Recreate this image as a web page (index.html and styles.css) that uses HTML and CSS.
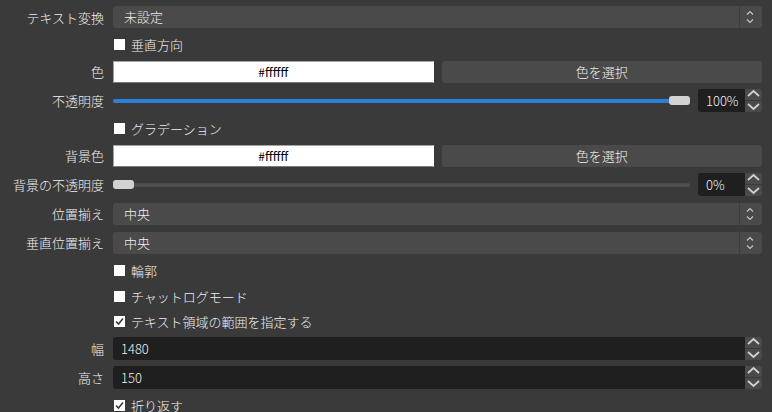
FILE: index.html
```html
<!DOCTYPE html>
<html>
<head>
  <meta charset="utf-8">
  <title>テキストのプロパティ</title>
  <link rel="stylesheet" href="styles.css">
</head>
<body>

  <div class="props">

    <div class="row first">
      <label class="name">テキスト変換</label>
      <div class="combo">
        <span class="combo-text">未設定</span>
        <span class="combo-arrows"><svg width="22" height="22" viewBox="0 0 22 22"><polyline points="7,8.5 10,5.5 13,8.5"/><polyline points="7,13.5 10,16.5 13,13.5"/></svg></span>
      </div>
    </div>

    <div class="row check">
      <span></span>
      <div class="cb"><span class="box"></span>垂直方向</div>
    </div>

    <div class="row">
      <label class="name">色</label>
      <div class="color-grid">
        <div class="color-field">#ffffff</div>
        <div class="btn">色を選択</div>
      </div>
    </div>

    <div class="row">
      <label class="name">不透明度</label>
      <div class="slider-row">
        <div class="track">
          <div class="fill"></div>
          <div class="handle end"></div>
        </div>
        <div class="spin">
          <div class="spin-val">100%</div>
          <div class="spin-btns">
            <span class="up"><svg width="17" height="11" viewBox="0 0 17 11"><polyline points="3,7 8.5,2 14,7"/></svg></span>
            <span class="down"><svg width="17" height="11" viewBox="0 0 17 11"><polyline points="3,3 8.5,8 14,3"/></svg></span>
          </div>
        </div>
      </div>
    </div>

    <div class="row check">
      <span></span>
      <div class="cb"><span class="box"></span>グラデーション</div>
    </div>

    <div class="row">
      <label class="name">背景色</label>
      <div class="color-grid">
        <div class="color-field">#ffffff</div>
        <div class="btn">色を選択</div>
      </div>
    </div>

    <div class="row">
      <label class="name">背景の不透明度</label>
      <div class="slider-row">
        <div class="track">
          <div class="handle start"></div>
        </div>
        <div class="spin">
          <div class="spin-val">0%</div>
          <div class="spin-btns">
            <span class="up"><svg width="17" height="11" viewBox="0 0 17 11"><polyline points="3,7 8.5,2 14,7"/></svg></span>
            <span class="down"><svg width="17" height="11" viewBox="0 0 17 11"><polyline points="3,3 8.5,8 14,3"/></svg></span>
          </div>
        </div>
      </div>
    </div>

    <div class="row">
      <label class="name">位置揃え</label>
      <div class="combo">
        <span class="combo-text">中央</span>
        <span class="combo-arrows"><svg width="22" height="22" viewBox="0 0 22 22"><polyline points="7,8.5 10,5.5 13,8.5"/><polyline points="7,13.5 10,16.5 13,13.5"/></svg></span>
      </div>
    </div>

    <div class="row">
      <label class="name">垂直位置揃え</label>
      <div class="combo">
        <span class="combo-text">中央</span>
        <span class="combo-arrows"><svg width="22" height="22" viewBox="0 0 22 22"><polyline points="7,8.5 10,5.5 13,8.5"/><polyline points="7,13.5 10,16.5 13,13.5"/></svg></span>
      </div>
    </div>

    <div class="row check">
      <span></span>
      <div class="cb"><span class="box"></span>輪郭</div>
    </div>

    <div class="row check">
      <span></span>
      <div class="cb"><span class="box"></span>チャットログモード</div>
    </div>

    <div class="row check short">
      <span></span>
      <div class="cb"><span class="box"><svg width="11" height="11" viewBox="0 0 11 11"><polyline points="2,5.5 4.5,8 9,2.5"/></svg></span>テキスト領域の範囲を指定する</div>
    </div>

    <div class="row">
      <label class="name">幅</label>
      <div class="spin">
        <div class="spin-val">1480</div>
        <div class="spin-btns">
          <span class="up"><svg width="17" height="11" viewBox="0 0 17 11"><polyline points="3,7 8.5,2 14,7"/></svg></span>
          <span class="down"><svg width="17" height="11" viewBox="0 0 17 11"><polyline points="3,3 8.5,8 14,3"/></svg></span>
        </div>
      </div>
    </div>

    <div class="row">
      <label class="name">高さ</label>
      <div class="spin">
        <div class="spin-val">150</div>
        <div class="spin-btns">
          <span class="up"><svg width="17" height="11" viewBox="0 0 17 11"><polyline points="3,7 8.5,2 14,7"/></svg></span>
          <span class="down"><svg width="17" height="11" viewBox="0 0 17 11"><polyline points="3,3 8.5,8 14,3"/></svg></span>
        </div>
      </div>
    </div>

    <div class="row check">
      <span></span>
      <div class="cb"><span class="box"><svg width="11" height="11" viewBox="0 0 11 11"><polyline points="2,5.5 4.5,8 9,2.5"/></svg></span>折り返す</div>
    </div>

  </div>

</body>
</html>
```

FILE: styles.css
```css
body { margin: 0; background: #3a3a3a; color: #f0f0f0; font-family: "Noto Sans CJK JP", "Noto Sans", sans-serif; font-size: 13px; font-weight: 300; overflow: hidden; }
.props { display: flex; flex-direction: column; padding: 3px 10px 0 0; }
.row { display: grid; grid-template-columns: 104px 1fr; column-gap: 9px; align-items: center; height: 29px; }
.row.first { height: 28px; }
.row.check { height: 26px; }
.row.check.short { height: 25px; }
.name { text-align: right; white-space: nowrap; }

.combo { display: flex; height: 22px; background: #4a4a4a; border-radius: 3px; }
.combo-text { flex: 1; padding-left: 11px; line-height: 22px; }
.combo-arrows { width: 22px; border-left: 1px solid #3c3c3c; }
.combo-arrows svg { display: block; fill: none; stroke: #c4c4c4; stroke-width: 1.2; }

.cb { display: flex; align-items: center; }
.box { width: 11px; height: 11px; background: #fff; margin: 0 6px 0 1px; }
.box svg { display: block; fill: none; stroke: #3a3a3a; stroke-width: 1.6; }

.color-grid { display: grid; grid-template-columns: 1fr 1fr; column-gap: 8px; }
.color-field { height: 20px; line-height: 20px; background: #fff; color: #000; text-align: center; font-size: 12px; font-weight: 400; border: 1px solid #a2a2a2; border-right-color: #fff; border-bottom-color: #7a7a7a; }
.btn { height: 22px; line-height: 22px; background: #4a4a4a; border-radius: 3px; text-align: center; }

.slider-row { display: grid; grid-template-columns: 1fr 64px; column-gap: 8px; align-items: center; }
.track { position: relative; height: 4px; background: #4d4d4d; border-radius: 2px; }
.fill { height: 4px; background: #2a7fd9; border-radius: 2px; margin-right: 10px; }
.handle { position: absolute; top: -3px; width: 21px; height: 9px; background: #d2d2d2; border-radius: 3px; }
.handle.end { right: 0; }
.handle.start { left: 0; }

.spin { display: flex; height: 23px; }
.spin-val { flex: 1; background: #1f1f1f; border-radius: 3px 0 0 3px; padding-left: 8px; line-height: 23px; }
.spin-btns { width: 17px; display: flex; flex-direction: column; gap: 1px; }
.spin-btns span { flex: 1; background: #4a4a4a; overflow: hidden; }
.spin-btns .up { border-radius: 0 3px 0 0; }
.spin-btns .down { border-radius: 0 0 3px 0; }
.spin-btns svg { display: block; fill: none; stroke: #d0d0d0; stroke-width: 1.8; }
```
